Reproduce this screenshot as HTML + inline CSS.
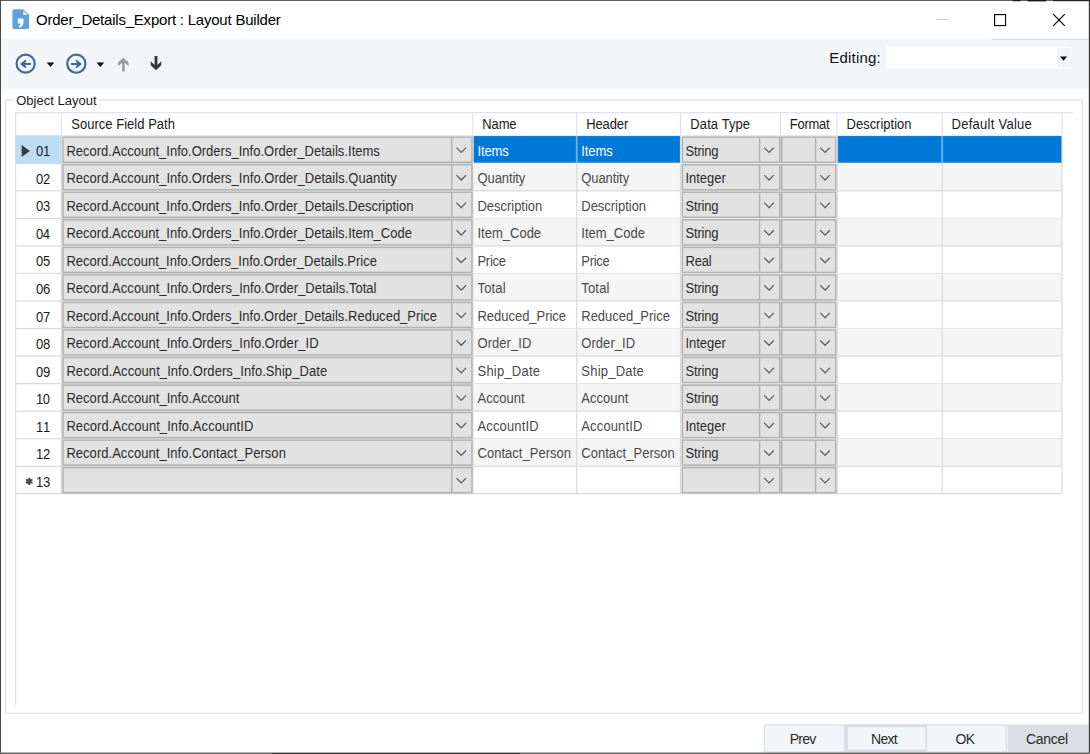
<!DOCTYPE html>
<html><head><meta charset="utf-8"><title>Order_Details_Export : Layout Builder</title>
<style>
html,body{margin:0;padding:0;background:#fff;}
body{width:1090px;height:754px;position:relative;overflow:hidden;}
svg{position:absolute;left:0;top:0;display:block;}
text{font-family:"Liberation Sans",sans-serif;white-space:pre;}
</style></head><body>
<svg width="1090" height="754" viewBox="0 0 1090 754">

<rect x="0.00" y="0.00" width="1090.00" height="754.00" fill="#fff"/>
<rect x="1.00" y="39.20" width="1087.20" height="49.50" fill="#f3f6f9"/>
<rect x="991.50" y="38.80" width="97.00" height="1.00" fill="#d4d4d4"/>
<g transform="translate(11.7 8.1) scale(1.035 1)">
<path d="M2.2 1.2 H11 L16.8 7 V19.3 Q16.8 20.8 15.3 20.8 H2.2 Q0.7 20.8 0.7 19.3 V2.7 Q0.7 1.2 2.2 1.2 Z" fill="#5ea3dc"/>
<path d="M11.2 2.6 L15.4 6.8 H11.2 Z" fill="#e8f2fb"/>
<path d="M5.9 10.3 H11.4 V14.2 Q11.2 17.8 7.6 19.6 L6.6 18.5 Q8.5 17.2 8.6 15.3 H5.9 Z" fill="#fff"/>
</g>
<text x="36.03" y="24.70" font-size="15.00" fill="#000" style="letter-spacing:-0.219px;">Order_Details_Export : Layout Builder</text>
<rect x="936.50" y="19.00" width="11.50" height="1.00" fill="#c8c8c8"/>
<g transform="translate(990 10)"><rect x="4.6" y="4.6" width="11" height="11" fill="none" stroke="#000" stroke-width="1.1"/><path d="M63.2 4.2 L74.8 15.8 M74.8 4.2 L63.2 15.8" stroke="#000" stroke-width="1.15" fill="none"/></g>
<circle cx="25.65" cy="63.65" r="9.05" fill="#f6f9fd" stroke="#41699f" stroke-width="2.2"/>
<path d="M30.95 63.95 H23.05" stroke="#3a5f98" stroke-width="1.9" fill="none"/>
<path d="M20.05 63.95 L25.45 59.75 L26.55 60.95 L23.85 63.95 L26.55 66.95 L25.45 68.15 Z" fill="#3464a8"/>
<circle cx="76.30" cy="63.70" r="9.05" fill="#f6f9fd" stroke="#41699f" stroke-width="2.2"/>
<path d="M71.00 64.00 H78.90" stroke="#3a5f98" stroke-width="1.9" fill="none"/>
<path d="M81.90 64.00 L76.50 59.80 L75.40 61.00 L78.10 64.00 L75.40 67.00 L76.50 68.20 Z" fill="#3464a8"/>
<path d="M46.7 62.6 H54.2 L50.45 66.9 Z" fill="#000"/>
<path d="M96.7 62.6 H104.1 L100.4 66.9 Z" fill="#000"/>
<path d="M123.4 57.7 L128.6 62.3 V66.2 L124.7 62.8 V71.4 H122.1 V62.8 L118.2 66.2 V62.3 Z" fill="#9c9c9c"/>
<path d="M156 70.2 L161.2 65.3 V61.3 L157.4 64.9 V56.1 H154.6 V64.9 L150.8 61.3 V65.3 Z" fill="#333"/>
<text x="829.30" y="62.70" font-size="15.00" fill="#111" style="letter-spacing:0.193px;" transform="translate(0 62.70) scale(1 1.030) translate(0 -62.70)">Editing:</text>
<rect x="886.30" y="46.60" width="184.20" height="21.90" fill="#fff"/>
<rect x="1057.00" y="48.10" width="13.20" height="19.30" fill="#f3f6f9"/>
<path d="M1060 56.4 H1067 L1063.5 60.8 Z" fill="#000"/>
<rect x="5.55" y="100.05" width="1076.70" height="613.20" fill="none" stroke="#dcdcdc" stroke-width="1.10"/>
<rect x="13.50" y="94.00" width="86.00" height="12.00" fill="#fff"/>
<text x="16.21" y="105.00" font-size="13.00" fill="#1a1a1a" style="letter-spacing:0.020px;">Object Layout</text>
<rect x="15.00" y="112.00" width="1058.00" height="1.20" fill="#dfe2e8"/>
<rect x="15.00" y="112.00" width="1.20" height="593.00" fill="#dfe2e8"/>
<rect x="60.70" y="112.00" width="1.20" height="23.70" fill="#dfe2e8"/>
<rect x="472.30" y="112.00" width="1.20" height="23.70" fill="#dfe2e8"/>
<rect x="576.10" y="112.00" width="1.20" height="23.70" fill="#dfe2e8"/>
<rect x="679.90" y="112.00" width="1.20" height="23.70" fill="#dfe2e8"/>
<rect x="779.90" y="112.00" width="1.20" height="23.70" fill="#dfe2e8"/>
<rect x="836.60" y="112.00" width="1.20" height="23.70" fill="#dfe2e8"/>
<rect x="941.60" y="112.00" width="1.20" height="23.70" fill="#dfe2e8"/>
<rect x="1061.40" y="112.00" width="1.20" height="23.70" fill="#dfe2e8"/>
<rect x="15.60" y="135.10" width="1046.40" height="1.00" fill="#e4e6ea"/>
<text x="71.22" y="129.40" font-size="13.00" fill="#1a1a1a" style="letter-spacing:0.032px;" transform="translate(0 129.40) scale(1 1.070) translate(0 -129.40)">Source Field Path</text>
<text x="482.36" y="129.40" font-size="13.00" fill="#1a1a1a" style="letter-spacing:-0.162px;" transform="translate(0 129.40) scale(1 1.070) translate(0 -129.40)">Name</text>
<text x="586.16" y="129.40" font-size="13.00" fill="#1a1a1a" style="letter-spacing:-0.101px;" transform="translate(0 129.40) scale(1 1.070) translate(0 -129.40)">Header</text>
<text x="690.36" y="129.40" font-size="13.00" fill="#1a1a1a" style="letter-spacing:0.093px;" transform="translate(0 129.40) scale(1 1.070) translate(0 -129.40)">Data Type</text>
<text x="789.86" y="129.40" font-size="13.00" fill="#1a1a1a" style="letter-spacing:-0.268px;" transform="translate(0 129.40) scale(1 1.070) translate(0 -129.40)">Format</text>
<text x="846.56" y="129.40" font-size="13.00" fill="#1a1a1a" style="letter-spacing:-0.008px;" transform="translate(0 129.40) scale(1 1.070) translate(0 -129.40)">Description</text>
<text x="951.56" y="129.40" font-size="13.00" fill="#1a1a1a" style="letter-spacing:0.264px;" transform="translate(0 129.40) scale(1 1.070) translate(0 -129.40)">Default Value</text>
<rect x="473.50" y="136.05" width="207.00" height="26.90" fill="#0078d7"/>
<rect x="837.50" y="136.05" width="224.50" height="26.90" fill="#0078d7"/>
<rect x="15.60" y="162.69" width="1046.40" height="1.20" fill="#dadada"/>
<rect x="15.60" y="135.45" width="45.40" height="28.20" fill="#bcdcf4"/>
<rect x="60.70" y="135.75" width="1.20" height="27.50" fill="#dadada"/>
<rect x="472.30" y="135.75" width="1.20" height="27.50" fill="#dadada"/>
<rect x="575.80" y="136.05" width="1.80" height="26.90" fill="#6fb0ee"/>
<rect x="679.90" y="135.75" width="1.20" height="27.50" fill="#dadada"/>
<rect x="779.90" y="135.75" width="1.20" height="27.50" fill="#dadada"/>
<rect x="836.60" y="135.75" width="1.20" height="27.50" fill="#dadada"/>
<rect x="941.30" y="136.05" width="1.80" height="26.90" fill="#6fb0ee"/>
<rect x="1061.40" y="135.75" width="1.20" height="27.50" fill="#dadada"/>
<rect x="62.95" y="137.15" width="409.00" height="25.09" fill="#e2e2e2" stroke="#b2b2b2" stroke-width="1.50"/>
<rect x="451.10" y="137.10" width="1.40" height="25.19" fill="#b2b2b2"/>
<path d="M456.45 147.59 l4.8 4.9 l4.8 -4.9" fill="none" stroke="#585858" stroke-width="1.2"/>
<rect x="682.35" y="137.15" width="97.40" height="25.09" fill="#e2e2e2" stroke="#b2b2b2" stroke-width="1.50"/>
<rect x="758.90" y="137.10" width="1.40" height="25.19" fill="#b2b2b2"/>
<path d="M764.25 147.59 l4.8 4.9 l4.8 -4.9" fill="none" stroke="#585858" stroke-width="1.2"/>
<rect x="781.75" y="137.15" width="54.00" height="25.09" fill="#e2e2e2" stroke="#b2b2b2" stroke-width="1.50"/>
<rect x="814.90" y="137.10" width="1.40" height="25.19" fill="#b2b2b2"/>
<path d="M820.25 147.59 l4.8 4.9 l4.8 -4.9" fill="none" stroke="#585858" stroke-width="1.2"/>
<text x="35.90" y="156.35" font-size="13.00" fill="#1a1a1a" style="letter-spacing:-0.145px;" transform="translate(0 156.35) scale(1 1.070) translate(0 -156.35)">01</text>
<text x="66.40" y="155.55" font-size="13.00" fill="#2b2b2b" style="letter-spacing:0.016px;" transform="translate(0 155.55) scale(1 1.070) translate(0 -155.55)">Record.Account_Info.Orders_Info.Order_Details.Items</text>
<text x="477.50" y="155.55" font-size="13.00" fill="#fff" style="letter-spacing:-0.108px;" transform="translate(0 155.55) scale(1 1.070) translate(0 -155.55)">Items</text>
<text x="581.30" y="155.55" font-size="13.00" fill="#fff" style="letter-spacing:-0.107px;" transform="translate(0 155.55) scale(1 1.070) translate(0 -155.55)">Items</text>
<text x="685.50" y="155.55" font-size="13.00" fill="#2b2b2b" style="letter-spacing:-0.190px;" transform="translate(0 155.55) scale(1 1.070) translate(0 -155.55)">String</text>
<rect x="473.50" y="163.29" width="588.50" height="27.50" fill="#f5f5f5"/>
<rect x="15.60" y="190.23" width="1046.40" height="1.20" fill="#dadada"/>
<rect x="60.70" y="163.29" width="1.20" height="27.50" fill="#dadada"/>
<rect x="472.30" y="163.29" width="1.20" height="27.50" fill="#dadada"/>
<rect x="576.10" y="163.29" width="1.20" height="27.50" fill="#dadada"/>
<rect x="679.90" y="163.29" width="1.20" height="27.50" fill="#dadada"/>
<rect x="779.90" y="163.29" width="1.20" height="27.50" fill="#dadada"/>
<rect x="836.60" y="163.29" width="1.20" height="27.50" fill="#dadada"/>
<rect x="941.60" y="163.29" width="1.20" height="27.50" fill="#dadada"/>
<rect x="1061.40" y="163.29" width="1.20" height="27.50" fill="#dadada"/>
<rect x="62.95" y="164.69" width="409.00" height="25.09" fill="#e2e2e2" stroke="#b2b2b2" stroke-width="1.50"/>
<rect x="451.10" y="164.64" width="1.40" height="25.19" fill="#b2b2b2"/>
<path d="M456.45 175.13 l4.8 4.9 l4.8 -4.9" fill="none" stroke="#585858" stroke-width="1.2"/>
<rect x="682.35" y="164.69" width="97.40" height="25.09" fill="#e2e2e2" stroke="#b2b2b2" stroke-width="1.50"/>
<rect x="758.90" y="164.64" width="1.40" height="25.19" fill="#b2b2b2"/>
<path d="M764.25 175.13 l4.8 4.9 l4.8 -4.9" fill="none" stroke="#585858" stroke-width="1.2"/>
<rect x="781.75" y="164.69" width="54.00" height="25.09" fill="#e2e2e2" stroke="#b2b2b2" stroke-width="1.50"/>
<rect x="814.90" y="164.64" width="1.40" height="25.19" fill="#b2b2b2"/>
<path d="M820.25 175.13 l4.8 4.9 l4.8 -4.9" fill="none" stroke="#585858" stroke-width="1.2"/>
<text x="35.90" y="183.89" font-size="13.00" fill="#1a1a1a" style="letter-spacing:-0.080px;" transform="translate(0 183.89) scale(1 1.070) translate(0 -183.89)">02</text>
<text x="66.40" y="183.09" font-size="13.00" fill="#2b2b2b" style="letter-spacing:0.023px;" transform="translate(0 183.09) scale(1 1.070) translate(0 -183.09)">Record.Account_Info.Orders_Info.Order_Details.Quantity</text>
<text x="477.50" y="183.09" font-size="13.00" fill="#4a4a4a" style="letter-spacing:-0.075px;" transform="translate(0 183.09) scale(1 1.070) translate(0 -183.09)">Quantity</text>
<text x="581.30" y="183.09" font-size="13.00" fill="#4a4a4a" style="letter-spacing:-0.075px;" transform="translate(0 183.09) scale(1 1.070) translate(0 -183.09)">Quantity</text>
<text x="685.50" y="183.09" font-size="13.00" fill="#2b2b2b" style="letter-spacing:-0.033px;" transform="translate(0 183.09) scale(1 1.070) translate(0 -183.09)">Integer</text>
<rect x="15.60" y="217.77" width="1046.40" height="1.20" fill="#dadada"/>
<rect x="60.70" y="190.83" width="1.20" height="27.50" fill="#dadada"/>
<rect x="472.30" y="190.83" width="1.20" height="27.50" fill="#dadada"/>
<rect x="576.10" y="190.83" width="1.20" height="27.50" fill="#dadada"/>
<rect x="679.90" y="190.83" width="1.20" height="27.50" fill="#dadada"/>
<rect x="779.90" y="190.83" width="1.20" height="27.50" fill="#dadada"/>
<rect x="836.60" y="190.83" width="1.20" height="27.50" fill="#dadada"/>
<rect x="941.60" y="190.83" width="1.20" height="27.50" fill="#dadada"/>
<rect x="1061.40" y="190.83" width="1.20" height="27.50" fill="#dadada"/>
<rect x="62.95" y="192.23" width="409.00" height="25.09" fill="#e2e2e2" stroke="#b2b2b2" stroke-width="1.50"/>
<rect x="451.10" y="192.18" width="1.40" height="25.19" fill="#b2b2b2"/>
<path d="M456.45 202.67 l4.8 4.9 l4.8 -4.9" fill="none" stroke="#585858" stroke-width="1.2"/>
<rect x="682.35" y="192.23" width="97.40" height="25.09" fill="#e2e2e2" stroke="#b2b2b2" stroke-width="1.50"/>
<rect x="758.90" y="192.18" width="1.40" height="25.19" fill="#b2b2b2"/>
<path d="M764.25 202.67 l4.8 4.9 l4.8 -4.9" fill="none" stroke="#585858" stroke-width="1.2"/>
<rect x="781.75" y="192.23" width="54.00" height="25.09" fill="#e2e2e2" stroke="#b2b2b2" stroke-width="1.50"/>
<rect x="814.90" y="192.18" width="1.40" height="25.19" fill="#b2b2b2"/>
<path d="M820.25 202.67 l4.8 4.9 l4.8 -4.9" fill="none" stroke="#585858" stroke-width="1.2"/>
<text x="35.90" y="211.43" font-size="13.00" fill="#1a1a1a" style="letter-spacing:-0.210px;" transform="translate(0 211.43) scale(1 1.070) translate(0 -211.43)">03</text>
<text x="66.40" y="210.63" font-size="13.00" fill="#2b2b2b" style="letter-spacing:0.022px;" transform="translate(0 210.63) scale(1 1.070) translate(0 -210.63)">Record.Account_Info.Orders_Info.Order_Details.Description</text>
<text x="477.50" y="210.63" font-size="13.00" fill="#4a4a4a" style="letter-spacing:-0.022px;" transform="translate(0 210.63) scale(1 1.070) translate(0 -210.63)">Description</text>
<text x="581.30" y="210.63" font-size="13.00" fill="#4a4a4a" style="letter-spacing:-0.022px;" transform="translate(0 210.63) scale(1 1.070) translate(0 -210.63)">Description</text>
<text x="685.50" y="210.63" font-size="13.00" fill="#2b2b2b" style="letter-spacing:-0.190px;" transform="translate(0 210.63) scale(1 1.070) translate(0 -210.63)">String</text>
<rect x="473.50" y="218.37" width="588.50" height="27.50" fill="#f5f5f5"/>
<rect x="15.60" y="245.31" width="1046.40" height="1.20" fill="#dadada"/>
<rect x="60.70" y="218.37" width="1.20" height="27.50" fill="#dadada"/>
<rect x="472.30" y="218.37" width="1.20" height="27.50" fill="#dadada"/>
<rect x="576.10" y="218.37" width="1.20" height="27.50" fill="#dadada"/>
<rect x="679.90" y="218.37" width="1.20" height="27.50" fill="#dadada"/>
<rect x="779.90" y="218.37" width="1.20" height="27.50" fill="#dadada"/>
<rect x="836.60" y="218.37" width="1.20" height="27.50" fill="#dadada"/>
<rect x="941.60" y="218.37" width="1.20" height="27.50" fill="#dadada"/>
<rect x="1061.40" y="218.37" width="1.20" height="27.50" fill="#dadada"/>
<rect x="62.95" y="219.77" width="409.00" height="25.09" fill="#e2e2e2" stroke="#b2b2b2" stroke-width="1.50"/>
<rect x="451.10" y="219.72" width="1.40" height="25.19" fill="#b2b2b2"/>
<path d="M456.45 230.22 l4.8 4.9 l4.8 -4.9" fill="none" stroke="#585858" stroke-width="1.2"/>
<rect x="682.35" y="219.77" width="97.40" height="25.09" fill="#e2e2e2" stroke="#b2b2b2" stroke-width="1.50"/>
<rect x="758.90" y="219.72" width="1.40" height="25.19" fill="#b2b2b2"/>
<path d="M764.25 230.22 l4.8 4.9 l4.8 -4.9" fill="none" stroke="#585858" stroke-width="1.2"/>
<rect x="781.75" y="219.77" width="54.00" height="25.09" fill="#e2e2e2" stroke="#b2b2b2" stroke-width="1.50"/>
<rect x="814.90" y="219.72" width="1.40" height="25.19" fill="#b2b2b2"/>
<path d="M820.25 230.22 l4.8 4.9 l4.8 -4.9" fill="none" stroke="#585858" stroke-width="1.2"/>
<text x="35.90" y="238.97" font-size="13.00" fill="#1a1a1a" style="letter-spacing:-0.405px;" transform="translate(0 238.97) scale(1 1.070) translate(0 -238.97)">04</text>
<text x="66.40" y="238.17" font-size="13.00" fill="#2b2b2b" style="letter-spacing:0.021px;" transform="translate(0 238.17) scale(1 1.070) translate(0 -238.17)">Record.Account_Info.Orders_Info.Order_Details.Item_Code</text>
<text x="477.50" y="238.17" font-size="13.00" fill="#4a4a4a" style="letter-spacing:0.006px;" transform="translate(0 238.17) scale(1 1.070) translate(0 -238.17)">Item_Code</text>
<text x="581.30" y="238.17" font-size="13.00" fill="#4a4a4a" style="letter-spacing:0.006px;" transform="translate(0 238.17) scale(1 1.070) translate(0 -238.17)">Item_Code</text>
<text x="685.50" y="238.17" font-size="13.00" fill="#2b2b2b" style="letter-spacing:-0.190px;" transform="translate(0 238.17) scale(1 1.070) translate(0 -238.17)">String</text>
<rect x="15.60" y="272.85" width="1046.40" height="1.20" fill="#dadada"/>
<rect x="60.70" y="245.91" width="1.20" height="27.50" fill="#dadada"/>
<rect x="472.30" y="245.91" width="1.20" height="27.50" fill="#dadada"/>
<rect x="576.10" y="245.91" width="1.20" height="27.50" fill="#dadada"/>
<rect x="679.90" y="245.91" width="1.20" height="27.50" fill="#dadada"/>
<rect x="779.90" y="245.91" width="1.20" height="27.50" fill="#dadada"/>
<rect x="836.60" y="245.91" width="1.20" height="27.50" fill="#dadada"/>
<rect x="941.60" y="245.91" width="1.20" height="27.50" fill="#dadada"/>
<rect x="1061.40" y="245.91" width="1.20" height="27.50" fill="#dadada"/>
<rect x="62.95" y="247.31" width="409.00" height="25.09" fill="#e2e2e2" stroke="#b2b2b2" stroke-width="1.50"/>
<rect x="451.10" y="247.26" width="1.40" height="25.19" fill="#b2b2b2"/>
<path d="M456.45 257.75 l4.8 4.9 l4.8 -4.9" fill="none" stroke="#585858" stroke-width="1.2"/>
<rect x="682.35" y="247.31" width="97.40" height="25.09" fill="#e2e2e2" stroke="#b2b2b2" stroke-width="1.50"/>
<rect x="758.90" y="247.26" width="1.40" height="25.19" fill="#b2b2b2"/>
<path d="M764.25 257.75 l4.8 4.9 l4.8 -4.9" fill="none" stroke="#585858" stroke-width="1.2"/>
<rect x="781.75" y="247.31" width="54.00" height="25.09" fill="#e2e2e2" stroke="#b2b2b2" stroke-width="1.50"/>
<rect x="814.90" y="247.26" width="1.40" height="25.19" fill="#b2b2b2"/>
<path d="M820.25 257.75 l4.8 4.9 l4.8 -4.9" fill="none" stroke="#585858" stroke-width="1.2"/>
<text x="35.90" y="266.51" font-size="13.00" fill="#1a1a1a" style="letter-spacing:-0.210px;" transform="translate(0 266.51) scale(1 1.070) translate(0 -266.51)">05</text>
<text x="66.40" y="265.71" font-size="13.00" fill="#2b2b2b" style="letter-spacing:0.002px;" transform="translate(0 265.71) scale(1 1.070) translate(0 -265.71)">Record.Account_Info.Orders_Info.Order_Details.Price</text>
<text x="477.50" y="265.71" font-size="13.00" fill="#4a4a4a" style="letter-spacing:-0.289px;" transform="translate(0 265.71) scale(1 1.070) translate(0 -265.71)">Price</text>
<text x="581.30" y="265.71" font-size="13.00" fill="#4a4a4a" style="letter-spacing:-0.289px;" transform="translate(0 265.71) scale(1 1.070) translate(0 -265.71)">Price</text>
<text x="685.50" y="265.71" font-size="13.00" fill="#2b2b2b" style="letter-spacing:-0.157px;" transform="translate(0 265.71) scale(1 1.070) translate(0 -265.71)">Real</text>
<rect x="473.50" y="273.45" width="588.50" height="27.50" fill="#f5f5f5"/>
<rect x="15.60" y="300.39" width="1046.40" height="1.20" fill="#dadada"/>
<rect x="60.70" y="273.45" width="1.20" height="27.50" fill="#dadada"/>
<rect x="472.30" y="273.45" width="1.20" height="27.50" fill="#dadada"/>
<rect x="576.10" y="273.45" width="1.20" height="27.50" fill="#dadada"/>
<rect x="679.90" y="273.45" width="1.20" height="27.50" fill="#dadada"/>
<rect x="779.90" y="273.45" width="1.20" height="27.50" fill="#dadada"/>
<rect x="836.60" y="273.45" width="1.20" height="27.50" fill="#dadada"/>
<rect x="941.60" y="273.45" width="1.20" height="27.50" fill="#dadada"/>
<rect x="1061.40" y="273.45" width="1.20" height="27.50" fill="#dadada"/>
<rect x="62.95" y="274.85" width="409.00" height="25.09" fill="#e2e2e2" stroke="#b2b2b2" stroke-width="1.50"/>
<rect x="451.10" y="274.80" width="1.40" height="25.19" fill="#b2b2b2"/>
<path d="M456.45 285.29 l4.8 4.9 l4.8 -4.9" fill="none" stroke="#585858" stroke-width="1.2"/>
<rect x="682.35" y="274.85" width="97.40" height="25.09" fill="#e2e2e2" stroke="#b2b2b2" stroke-width="1.50"/>
<rect x="758.90" y="274.80" width="1.40" height="25.19" fill="#b2b2b2"/>
<path d="M764.25 285.29 l4.8 4.9 l4.8 -4.9" fill="none" stroke="#585858" stroke-width="1.2"/>
<rect x="781.75" y="274.85" width="54.00" height="25.09" fill="#e2e2e2" stroke="#b2b2b2" stroke-width="1.50"/>
<rect x="814.90" y="274.80" width="1.40" height="25.19" fill="#b2b2b2"/>
<path d="M820.25 285.29 l4.8 4.9 l4.8 -4.9" fill="none" stroke="#585858" stroke-width="1.2"/>
<text x="35.90" y="294.05" font-size="13.00" fill="#1a1a1a" style="letter-spacing:-0.210px;" transform="translate(0 294.05) scale(1 1.070) translate(0 -294.05)">06</text>
<text x="66.40" y="293.25" font-size="13.00" fill="#2b2b2b" style="letter-spacing:0.035px;" transform="translate(0 293.25) scale(1 1.070) translate(0 -293.25)">Record.Account_Info.Orders_Info.Order_Details.Total</text>
<text x="477.50" y="293.25" font-size="13.00" fill="#4a4a4a" style="letter-spacing:0.179px;" transform="translate(0 293.25) scale(1 1.070) translate(0 -293.25)">Total</text>
<text x="581.30" y="293.25" font-size="13.00" fill="#4a4a4a" style="letter-spacing:0.179px;" transform="translate(0 293.25) scale(1 1.070) translate(0 -293.25)">Total</text>
<text x="685.50" y="293.25" font-size="13.00" fill="#2b2b2b" style="letter-spacing:-0.190px;" transform="translate(0 293.25) scale(1 1.070) translate(0 -293.25)">String</text>
<rect x="15.60" y="327.93" width="1046.40" height="1.20" fill="#dadada"/>
<rect x="60.70" y="300.99" width="1.20" height="27.50" fill="#dadada"/>
<rect x="472.30" y="300.99" width="1.20" height="27.50" fill="#dadada"/>
<rect x="576.10" y="300.99" width="1.20" height="27.50" fill="#dadada"/>
<rect x="679.90" y="300.99" width="1.20" height="27.50" fill="#dadada"/>
<rect x="779.90" y="300.99" width="1.20" height="27.50" fill="#dadada"/>
<rect x="836.60" y="300.99" width="1.20" height="27.50" fill="#dadada"/>
<rect x="941.60" y="300.99" width="1.20" height="27.50" fill="#dadada"/>
<rect x="1061.40" y="300.99" width="1.20" height="27.50" fill="#dadada"/>
<rect x="62.95" y="302.39" width="409.00" height="25.09" fill="#e2e2e2" stroke="#b2b2b2" stroke-width="1.50"/>
<rect x="451.10" y="302.34" width="1.40" height="25.19" fill="#b2b2b2"/>
<path d="M456.45 312.83 l4.8 4.9 l4.8 -4.9" fill="none" stroke="#585858" stroke-width="1.2"/>
<rect x="682.35" y="302.39" width="97.40" height="25.09" fill="#e2e2e2" stroke="#b2b2b2" stroke-width="1.50"/>
<rect x="758.90" y="302.34" width="1.40" height="25.19" fill="#b2b2b2"/>
<path d="M764.25 312.83 l4.8 4.9 l4.8 -4.9" fill="none" stroke="#585858" stroke-width="1.2"/>
<rect x="781.75" y="302.39" width="54.00" height="25.09" fill="#e2e2e2" stroke="#b2b2b2" stroke-width="1.50"/>
<rect x="814.90" y="302.34" width="1.40" height="25.19" fill="#b2b2b2"/>
<path d="M820.25 312.83 l4.8 4.9 l4.8 -4.9" fill="none" stroke="#585858" stroke-width="1.2"/>
<text x="35.90" y="321.59" font-size="13.00" fill="#1a1a1a" style="letter-spacing:-0.080px;" transform="translate(0 321.59) scale(1 1.070) translate(0 -321.59)">07</text>
<text x="66.40" y="320.79" font-size="13.00" fill="#2b2b2b" style="letter-spacing:0.016px;" transform="translate(0 320.79) scale(1 1.070) translate(0 -320.79)">Record.Account_Info.Orders_Info.Order_Details.Reduced_Price</text>
<text x="477.50" y="320.79" font-size="13.00" fill="#4a4a4a" style="letter-spacing:-0.020px;" transform="translate(0 320.79) scale(1 1.070) translate(0 -320.79)">Reduced_Price</text>
<text x="581.30" y="320.79" font-size="13.00" fill="#4a4a4a" style="letter-spacing:-0.020px;" transform="translate(0 320.79) scale(1 1.070) translate(0 -320.79)">Reduced_Price</text>
<text x="685.50" y="320.79" font-size="13.00" fill="#2b2b2b" style="letter-spacing:-0.190px;" transform="translate(0 320.79) scale(1 1.070) translate(0 -320.79)">String</text>
<rect x="473.50" y="328.53" width="588.50" height="27.50" fill="#f5f5f5"/>
<rect x="15.60" y="355.47" width="1046.40" height="1.20" fill="#dadada"/>
<rect x="60.70" y="328.53" width="1.20" height="27.50" fill="#dadada"/>
<rect x="472.30" y="328.53" width="1.20" height="27.50" fill="#dadada"/>
<rect x="576.10" y="328.53" width="1.20" height="27.50" fill="#dadada"/>
<rect x="679.90" y="328.53" width="1.20" height="27.50" fill="#dadada"/>
<rect x="779.90" y="328.53" width="1.20" height="27.50" fill="#dadada"/>
<rect x="836.60" y="328.53" width="1.20" height="27.50" fill="#dadada"/>
<rect x="941.60" y="328.53" width="1.20" height="27.50" fill="#dadada"/>
<rect x="1061.40" y="328.53" width="1.20" height="27.50" fill="#dadada"/>
<rect x="62.95" y="329.93" width="409.00" height="25.09" fill="#e2e2e2" stroke="#b2b2b2" stroke-width="1.50"/>
<rect x="451.10" y="329.88" width="1.40" height="25.19" fill="#b2b2b2"/>
<path d="M456.45 340.37 l4.8 4.9 l4.8 -4.9" fill="none" stroke="#585858" stroke-width="1.2"/>
<rect x="682.35" y="329.93" width="97.40" height="25.09" fill="#e2e2e2" stroke="#b2b2b2" stroke-width="1.50"/>
<rect x="758.90" y="329.88" width="1.40" height="25.19" fill="#b2b2b2"/>
<path d="M764.25 340.37 l4.8 4.9 l4.8 -4.9" fill="none" stroke="#585858" stroke-width="1.2"/>
<rect x="781.75" y="329.93" width="54.00" height="25.09" fill="#e2e2e2" stroke="#b2b2b2" stroke-width="1.50"/>
<rect x="814.90" y="329.88" width="1.40" height="25.19" fill="#b2b2b2"/>
<path d="M820.25 340.37 l4.8 4.9 l4.8 -4.9" fill="none" stroke="#585858" stroke-width="1.2"/>
<text x="35.90" y="349.13" font-size="13.00" fill="#1a1a1a" style="letter-spacing:-0.210px;" transform="translate(0 349.13) scale(1 1.070) translate(0 -349.13)">08</text>
<text x="66.40" y="348.33" font-size="13.00" fill="#2b2b2b" style="letter-spacing:0.041px;" transform="translate(0 348.33) scale(1 1.070) translate(0 -348.33)">Record.Account_Info.Orders_Info.Order_ID</text>
<text x="477.50" y="348.33" font-size="13.00" fill="#4a4a4a" style="letter-spacing:0.051px;" transform="translate(0 348.33) scale(1 1.070) translate(0 -348.33)">Order_ID</text>
<text x="581.30" y="348.33" font-size="13.00" fill="#4a4a4a" style="letter-spacing:0.051px;" transform="translate(0 348.33) scale(1 1.070) translate(0 -348.33)">Order_ID</text>
<text x="685.50" y="348.33" font-size="13.00" fill="#2b2b2b" style="letter-spacing:-0.033px;" transform="translate(0 348.33) scale(1 1.070) translate(0 -348.33)">Integer</text>
<rect x="15.60" y="383.01" width="1046.40" height="1.20" fill="#dadada"/>
<rect x="60.70" y="356.07" width="1.20" height="27.50" fill="#dadada"/>
<rect x="472.30" y="356.07" width="1.20" height="27.50" fill="#dadada"/>
<rect x="576.10" y="356.07" width="1.20" height="27.50" fill="#dadada"/>
<rect x="679.90" y="356.07" width="1.20" height="27.50" fill="#dadada"/>
<rect x="779.90" y="356.07" width="1.20" height="27.50" fill="#dadada"/>
<rect x="836.60" y="356.07" width="1.20" height="27.50" fill="#dadada"/>
<rect x="941.60" y="356.07" width="1.20" height="27.50" fill="#dadada"/>
<rect x="1061.40" y="356.07" width="1.20" height="27.50" fill="#dadada"/>
<rect x="62.95" y="357.47" width="409.00" height="25.09" fill="#e2e2e2" stroke="#b2b2b2" stroke-width="1.50"/>
<rect x="451.10" y="357.42" width="1.40" height="25.19" fill="#b2b2b2"/>
<path d="M456.45 367.91 l4.8 4.9 l4.8 -4.9" fill="none" stroke="#585858" stroke-width="1.2"/>
<rect x="682.35" y="357.47" width="97.40" height="25.09" fill="#e2e2e2" stroke="#b2b2b2" stroke-width="1.50"/>
<rect x="758.90" y="357.42" width="1.40" height="25.19" fill="#b2b2b2"/>
<path d="M764.25 367.91 l4.8 4.9 l4.8 -4.9" fill="none" stroke="#585858" stroke-width="1.2"/>
<rect x="781.75" y="357.47" width="54.00" height="25.09" fill="#e2e2e2" stroke="#b2b2b2" stroke-width="1.50"/>
<rect x="814.90" y="357.42" width="1.40" height="25.19" fill="#b2b2b2"/>
<path d="M820.25 367.91 l4.8 4.9 l4.8 -4.9" fill="none" stroke="#585858" stroke-width="1.2"/>
<text x="35.90" y="376.67" font-size="13.00" fill="#1a1a1a" style="letter-spacing:-0.145px;" transform="translate(0 376.67) scale(1 1.070) translate(0 -376.67)">09</text>
<text x="66.40" y="375.87" font-size="13.00" fill="#2b2b2b" style="letter-spacing:0.073px;" transform="translate(0 375.87) scale(1 1.070) translate(0 -375.87)">Record.Account_Info.Orders_Info.Ship_Date</text>
<text x="477.50" y="375.87" font-size="13.00" fill="#4a4a4a" style="letter-spacing:0.226px;" transform="translate(0 375.87) scale(1 1.070) translate(0 -375.87)">Ship_Date</text>
<text x="581.30" y="375.87" font-size="13.00" fill="#4a4a4a" style="letter-spacing:0.226px;" transform="translate(0 375.87) scale(1 1.070) translate(0 -375.87)">Ship_Date</text>
<text x="685.50" y="375.87" font-size="13.00" fill="#2b2b2b" style="letter-spacing:-0.190px;" transform="translate(0 375.87) scale(1 1.070) translate(0 -375.87)">String</text>
<rect x="473.50" y="383.61" width="588.50" height="27.50" fill="#f5f5f5"/>
<rect x="15.60" y="410.55" width="1046.40" height="1.20" fill="#dadada"/>
<rect x="60.70" y="383.61" width="1.20" height="27.50" fill="#dadada"/>
<rect x="472.30" y="383.61" width="1.20" height="27.50" fill="#dadada"/>
<rect x="576.10" y="383.61" width="1.20" height="27.50" fill="#dadada"/>
<rect x="679.90" y="383.61" width="1.20" height="27.50" fill="#dadada"/>
<rect x="779.90" y="383.61" width="1.20" height="27.50" fill="#dadada"/>
<rect x="836.60" y="383.61" width="1.20" height="27.50" fill="#dadada"/>
<rect x="941.60" y="383.61" width="1.20" height="27.50" fill="#dadada"/>
<rect x="1061.40" y="383.61" width="1.20" height="27.50" fill="#dadada"/>
<rect x="62.95" y="385.01" width="409.00" height="25.09" fill="#e2e2e2" stroke="#b2b2b2" stroke-width="1.50"/>
<rect x="451.10" y="384.96" width="1.40" height="25.19" fill="#b2b2b2"/>
<path d="M456.45 395.45 l4.8 4.9 l4.8 -4.9" fill="none" stroke="#585858" stroke-width="1.2"/>
<rect x="682.35" y="385.01" width="97.40" height="25.09" fill="#e2e2e2" stroke="#b2b2b2" stroke-width="1.50"/>
<rect x="758.90" y="384.96" width="1.40" height="25.19" fill="#b2b2b2"/>
<path d="M764.25 395.45 l4.8 4.9 l4.8 -4.9" fill="none" stroke="#585858" stroke-width="1.2"/>
<rect x="781.75" y="385.01" width="54.00" height="25.09" fill="#e2e2e2" stroke="#b2b2b2" stroke-width="1.50"/>
<rect x="814.90" y="384.96" width="1.40" height="25.19" fill="#b2b2b2"/>
<path d="M820.25 395.45 l4.8 4.9 l4.8 -4.9" fill="none" stroke="#585858" stroke-width="1.2"/>
<text x="35.90" y="404.21" font-size="13.00" fill="#1a1a1a" style="letter-spacing:-0.275px;" transform="translate(0 404.21) scale(1 1.070) translate(0 -404.21)">10</text>
<text x="66.40" y="403.41" font-size="13.00" fill="#2b2b2b" style="letter-spacing:0.044px;" transform="translate(0 403.41) scale(1 1.070) translate(0 -403.41)">Record.Account_Info.Account</text>
<text x="477.50" y="403.41" font-size="13.00" fill="#4a4a4a" style="letter-spacing:0.022px;" transform="translate(0 403.41) scale(1 1.070) translate(0 -403.41)">Account</text>
<text x="581.30" y="403.41" font-size="13.00" fill="#4a4a4a" style="letter-spacing:0.023px;" transform="translate(0 403.41) scale(1 1.070) translate(0 -403.41)">Account</text>
<text x="685.50" y="403.41" font-size="13.00" fill="#2b2b2b" style="letter-spacing:-0.190px;" transform="translate(0 403.41) scale(1 1.070) translate(0 -403.41)">String</text>
<rect x="15.60" y="438.09" width="1046.40" height="1.20" fill="#dadada"/>
<rect x="60.70" y="411.15" width="1.20" height="27.50" fill="#dadada"/>
<rect x="472.30" y="411.15" width="1.20" height="27.50" fill="#dadada"/>
<rect x="576.10" y="411.15" width="1.20" height="27.50" fill="#dadada"/>
<rect x="679.90" y="411.15" width="1.20" height="27.50" fill="#dadada"/>
<rect x="779.90" y="411.15" width="1.20" height="27.50" fill="#dadada"/>
<rect x="836.60" y="411.15" width="1.20" height="27.50" fill="#dadada"/>
<rect x="941.60" y="411.15" width="1.20" height="27.50" fill="#dadada"/>
<rect x="1061.40" y="411.15" width="1.20" height="27.50" fill="#dadada"/>
<rect x="62.95" y="412.55" width="409.00" height="25.09" fill="#e2e2e2" stroke="#b2b2b2" stroke-width="1.50"/>
<rect x="451.10" y="412.50" width="1.40" height="25.19" fill="#b2b2b2"/>
<path d="M456.45 422.99 l4.8 4.9 l4.8 -4.9" fill="none" stroke="#585858" stroke-width="1.2"/>
<rect x="682.35" y="412.55" width="97.40" height="25.09" fill="#e2e2e2" stroke="#b2b2b2" stroke-width="1.50"/>
<rect x="758.90" y="412.50" width="1.40" height="25.19" fill="#b2b2b2"/>
<path d="M764.25 422.99 l4.8 4.9 l4.8 -4.9" fill="none" stroke="#585858" stroke-width="1.2"/>
<rect x="781.75" y="412.55" width="54.00" height="25.09" fill="#e2e2e2" stroke="#b2b2b2" stroke-width="1.50"/>
<rect x="814.90" y="412.50" width="1.40" height="25.19" fill="#b2b2b2"/>
<path d="M820.25 422.99 l4.8 4.9 l4.8 -4.9" fill="none" stroke="#585858" stroke-width="1.2"/>
<text x="35.90" y="431.75" font-size="13.00" fill="#1a1a1a" style="letter-spacing:0.830px;" transform="translate(0 431.75) scale(1 1.070) translate(0 -431.75)">11</text>
<text x="66.40" y="430.95" font-size="13.00" fill="#2b2b2b" style="letter-spacing:0.075px;" transform="translate(0 430.95) scale(1 1.070) translate(0 -430.95)">Record.Account_Info.AccountID</text>
<text x="477.50" y="430.95" font-size="13.00" fill="#4a4a4a" style="letter-spacing:0.144px;" transform="translate(0 430.95) scale(1 1.070) translate(0 -430.95)">AccountID</text>
<text x="581.30" y="430.95" font-size="13.00" fill="#4a4a4a" style="letter-spacing:0.144px;" transform="translate(0 430.95) scale(1 1.070) translate(0 -430.95)">AccountID</text>
<text x="685.50" y="430.95" font-size="13.00" fill="#2b2b2b" style="letter-spacing:-0.033px;" transform="translate(0 430.95) scale(1 1.070) translate(0 -430.95)">Integer</text>
<rect x="473.50" y="438.69" width="588.50" height="27.50" fill="#f5f5f5"/>
<rect x="15.60" y="465.63" width="1046.40" height="1.20" fill="#dadada"/>
<rect x="60.70" y="438.69" width="1.20" height="27.50" fill="#dadada"/>
<rect x="472.30" y="438.69" width="1.20" height="27.50" fill="#dadada"/>
<rect x="576.10" y="438.69" width="1.20" height="27.50" fill="#dadada"/>
<rect x="679.90" y="438.69" width="1.20" height="27.50" fill="#dadada"/>
<rect x="779.90" y="438.69" width="1.20" height="27.50" fill="#dadada"/>
<rect x="836.60" y="438.69" width="1.20" height="27.50" fill="#dadada"/>
<rect x="941.60" y="438.69" width="1.20" height="27.50" fill="#dadada"/>
<rect x="1061.40" y="438.69" width="1.20" height="27.50" fill="#dadada"/>
<rect x="62.95" y="440.09" width="409.00" height="25.09" fill="#e2e2e2" stroke="#b2b2b2" stroke-width="1.50"/>
<rect x="451.10" y="440.04" width="1.40" height="25.19" fill="#b2b2b2"/>
<path d="M456.45 450.53 l4.8 4.9 l4.8 -4.9" fill="none" stroke="#585858" stroke-width="1.2"/>
<rect x="682.35" y="440.09" width="97.40" height="25.09" fill="#e2e2e2" stroke="#b2b2b2" stroke-width="1.50"/>
<rect x="758.90" y="440.04" width="1.40" height="25.19" fill="#b2b2b2"/>
<path d="M764.25 450.53 l4.8 4.9 l4.8 -4.9" fill="none" stroke="#585858" stroke-width="1.2"/>
<rect x="781.75" y="440.09" width="54.00" height="25.09" fill="#e2e2e2" stroke="#b2b2b2" stroke-width="1.50"/>
<rect x="814.90" y="440.04" width="1.40" height="25.19" fill="#b2b2b2"/>
<path d="M820.25 450.53 l4.8 4.9 l4.8 -4.9" fill="none" stroke="#585858" stroke-width="1.2"/>
<text x="35.90" y="459.29" font-size="13.00" fill="#1a1a1a" style="letter-spacing:-0.080px;" transform="translate(0 459.29) scale(1 1.070) translate(0 -459.29)">12</text>
<text x="66.40" y="458.49" font-size="13.00" fill="#2b2b2b" style="letter-spacing:0.042px;" transform="translate(0 458.49) scale(1 1.070) translate(0 -458.49)">Record.Account_Info.Contact_Person</text>
<text x="477.50" y="458.49" font-size="13.00" fill="#4a4a4a" style="letter-spacing:0.028px;" transform="translate(0 458.49) scale(1 1.070) translate(0 -458.49)">Contact_Person</text>
<text x="581.30" y="458.49" font-size="13.00" fill="#4a4a4a" style="letter-spacing:0.028px;" transform="translate(0 458.49) scale(1 1.070) translate(0 -458.49)">Contact_Person</text>
<text x="685.50" y="458.49" font-size="13.00" fill="#2b2b2b" style="letter-spacing:-0.190px;" transform="translate(0 458.49) scale(1 1.070) translate(0 -458.49)">String</text>
<rect x="15.60" y="493.17" width="1046.40" height="1.20" fill="#dadada"/>
<rect x="60.70" y="466.23" width="1.20" height="27.50" fill="#dadada"/>
<rect x="472.30" y="466.23" width="1.20" height="27.50" fill="#dadada"/>
<rect x="576.10" y="466.23" width="1.20" height="27.50" fill="#dadada"/>
<rect x="679.90" y="466.23" width="1.20" height="27.50" fill="#dadada"/>
<rect x="779.90" y="466.23" width="1.20" height="27.50" fill="#dadada"/>
<rect x="836.60" y="466.23" width="1.20" height="27.50" fill="#dadada"/>
<rect x="941.60" y="466.23" width="1.20" height="27.50" fill="#dadada"/>
<rect x="1061.40" y="466.23" width="1.20" height="27.50" fill="#dadada"/>
<rect x="62.95" y="467.63" width="409.00" height="25.09" fill="#e2e2e2" stroke="#b2b2b2" stroke-width="1.50"/>
<rect x="451.10" y="467.58" width="1.40" height="25.19" fill="#b2b2b2"/>
<path d="M456.45 478.07 l4.8 4.9 l4.8 -4.9" fill="none" stroke="#585858" stroke-width="1.2"/>
<rect x="682.35" y="467.63" width="97.40" height="25.09" fill="#e2e2e2" stroke="#b2b2b2" stroke-width="1.50"/>
<rect x="758.90" y="467.58" width="1.40" height="25.19" fill="#b2b2b2"/>
<path d="M764.25 478.07 l4.8 4.9 l4.8 -4.9" fill="none" stroke="#585858" stroke-width="1.2"/>
<rect x="781.75" y="467.63" width="54.00" height="25.09" fill="#e2e2e2" stroke="#b2b2b2" stroke-width="1.50"/>
<rect x="814.90" y="467.58" width="1.40" height="25.19" fill="#b2b2b2"/>
<path d="M820.25 478.07 l4.8 4.9 l4.8 -4.9" fill="none" stroke="#585858" stroke-width="1.2"/>
<text x="35.90" y="486.83" font-size="13.00" fill="#1a1a1a" style="letter-spacing:-0.210px;" transform="translate(0 486.83) scale(1 1.070) translate(0 -486.83)">13</text>
<path d="M21.7 145 L29.9 151 L21.7 157 Z" fill="#3c3c3c"/>
<text x="24.60" y="485.00" font-size="9.50" fill="#3a3a3a">&#10033;</text>
<circle cx="28.8" cy="481.6" r="2.5" fill="#4a4a4a"/>
<rect x="764.65" y="724.95" width="79.70" height="27.00" fill="#f3f6f9" stroke="#dde1e7" stroke-width="1.30"/>
<text x="789.78" y="743.90" font-size="14.00" fill="#2a2a2a" style="letter-spacing:-0.727px;" transform="translate(0 743.90) scale(1 1.050) translate(0 -743.90)">Prev</text>
<rect x="846.40" y="725.70" width="80.50" height="25.40" fill="#f3f6f9" stroke="#d9dde2" stroke-width="3.00"/>
<text x="870.98" y="743.90" font-size="14.00" fill="#2a2a2a" style="letter-spacing:-0.693px;" transform="translate(0 743.90) scale(1 1.050) translate(0 -743.90)">Next</text>
<rect x="926.45" y="724.95" width="79.70" height="27.00" fill="#f3f6f9" stroke="#dde1e7" stroke-width="1.30"/>
<text x="955.47" y="743.90" font-size="14.00" fill="#2a2a2a" style="letter-spacing:-0.560px;" transform="translate(0 743.90) scale(1 1.050) translate(0 -743.90)">OK</text>
<rect x="1007.40" y="724.40" width="81.30" height="28.20" fill="#dcdfe4"/>
<text x="1025.90" y="743.90" font-size="14.00" fill="#2a2a2a" style="letter-spacing:-0.286px;" transform="translate(0 743.90) scale(1 1.050) translate(0 -743.90)">Cancel</text>
<rect x="0.00" y="0.00" width="1090.00" height="0.90" fill="#4a4a4a"/>
<rect x="1012.50" y="0.00" width="8.00" height="1.30" fill="#222"/>
<rect x="1027.60" y="0.00" width="18.50" height="1.40" fill="#151515"/>
<rect x="1053.00" y="0.00" width="36.00" height="1.20" fill="#222"/>
<rect x="0.00" y="0.00" width="1.00" height="754.00" fill="#4a4640"/>
<rect x="1088.80" y="0.00" width="1.20" height="754.00" fill="#3f3f3f"/>
<rect x="0.00" y="752.50" width="1090.00" height="1.50" fill="#6a6a6a"/>
<rect x="272.00" y="753.20" width="248.00" height="0.80" fill="#2a2a2a"/>
</svg></body></html>
